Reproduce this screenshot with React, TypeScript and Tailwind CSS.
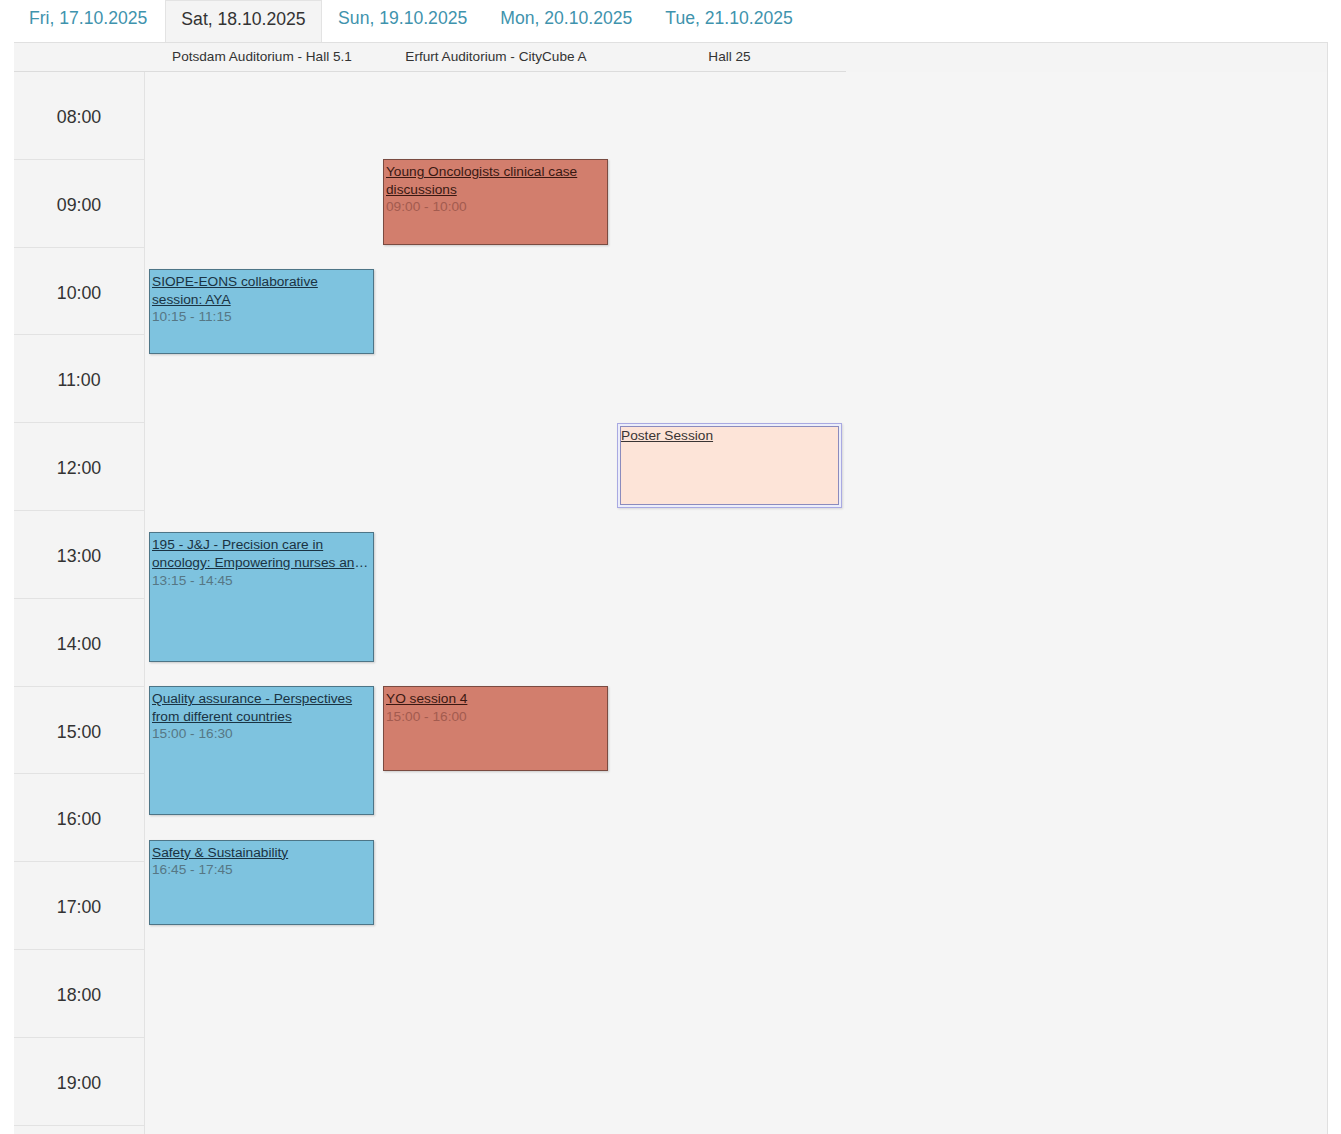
import React from "react";

type Session = {
  title: string;
  time?: string;
  room: number;
  start: number;
  end: number;
  kind: "blue" | "red" | "poster";
};

const HOUR = 87.8;

const days = [
  "Fri, 17.10.2025",
  "Sat, 18.10.2025",
  "Sun, 19.10.2025",
  "Mon, 20.10.2025",
  "Tue, 21.10.2025",
];

const rooms = ["Potsdam Auditorium - Hall 5.1", "Erfurt Auditorium - CityCube A", "Hall 25"];

const hours = ["08:00", "09:00", "10:00", "11:00", "12:00", "13:00", "14:00", "15:00", "16:00", "17:00", "18:00", "19:00", "20:00"];

const sessions: Session[] = [
  { title: "Young Oncologists clinical case discussions", time: "09:00 - 10:00", room: 1, start: 9, end: 10, kind: "red" },
  { title: "SIOPE-EONS collaborative session: AYA", time: "10:15 - 11:15", room: 0, start: 10.25, end: 11.25, kind: "blue" },
  { title: "Poster Session", room: 2, start: 12, end: 13, kind: "poster" },
  { title: "195 - J&J - Precision care in oncology: Empowering nurses and patients through innovation", time: "13:15 - 14:45", room: 0, start: 13.25, end: 14.75, kind: "blue" },
  { title: "Quality assurance - Perspectives from different countries", time: "15:00 - 16:30", room: 0, start: 15, end: 16.5, kind: "blue" },
  { title: "YO session 4", time: "15:00 - 16:00", room: 1, start: 15, end: 16, kind: "red" },
  { title: "Safety & Sustainability", time: "16:45 - 17:45", room: 0, start: 16.75, end: 17.75, kind: "blue" },
];

function SessionBlock({ s }: { s: Session }) {
  const style = {
    left: s.room * 234 + 4,
    top: (s.start - 8) * HOUR - 0.5,
    height: (s.end - s.start) * HOUR - 2.5,
  };

  if (s.kind === "poster") {
    return (
      <div
        style={style}
        className="absolute w-[225px] border border-[#a9a9e2] bg-[#eceefa] p-[2px] shadow-[1px_1px_2px_rgba(0,0,0,0.12)]"
      >
        <div className="h-full border border-[#8b8bbd] bg-[#fde4d8]">
          <a href="#" className="block text-[13.7px] leading-[17px] text-[#3a3434] underline">
            {s.title}
          </a>
        </div>
      </div>
    );
  }

  const blue = s.kind === "blue";
  return (
    <div
      style={style}
      className={
        blue
          ? "absolute w-[225px] border border-[#4d7587] bg-[#7ec3df] pl-[2px] pr-[3px] pt-[3px] shadow-[1px_1px_2px_rgba(0,0,0,0.18)]"
          : "absolute w-[225px] border border-[#7a4b41] bg-[#d27e6d] pl-[2px] pr-[3px] pt-[3px] shadow-[1px_1px_2px_rgba(0,0,0,0.18)]"
      }
    >
      <a
        href="#"
        className={
          blue
            ? "line-clamp-2 text-[13.7px] leading-[17.6px] text-[#1a3343] underline"
            : "line-clamp-2 text-[13.7px] leading-[17.6px] text-[#3a1812] underline"
        }
      >
        {s.title}
      </a>
      <div className={blue ? "text-[13.7px] leading-[17.6px] text-[#567785]" : "text-[13.7px] leading-[17.6px] text-[#a35b4f]"}>
        {s.time}
      </div>
    </div>
  );
}

export default function App() {
  return (
    <div className="min-h-screen bg-white font-['Liberation_Sans',Arial,sans-serif]">
      <div className="pl-[14px]">
        <div className="flex h-[42px] w-[854px] items-stretch bg-white">
          {days.map((d, i) =>
            i === 1 ? (
              <div
                key={d}
                className="border-x border-t border-[#e3e3e3] bg-[#f4f4f4] px-[15px] pt-[7px] text-[17.6px] leading-[22px] text-[#333]"
              >
                {d}
              </div>
            ) : (
              <a
                key={d}
                href="#"
                className={
                  i === 0
                    ? "pl-[15px] pr-[18px] pt-[7px] text-[17.6px] leading-[22px] text-[#3f93ad]"
                    : "px-[16.5px] pt-[7px] text-[17.6px] leading-[22px] text-[#3f93ad]"
                }
              >
                {d}
              </a>
            )
          )}
        </div>

        <div className="w-[1314px] border-r border-t border-[#e0e0e0] bg-[#f4f4f4]">
          <div className="grid h-[29px] w-[832px] grid-cols-[131px_234px_234px_233px] items-center border-b border-[#dcdcdc] pt-[1px] text-[13.6px] text-[#333]">
            <div />
            {rooms.map((r) => (
              <div key={r} className="text-center">
                {r}
              </div>
            ))}
          </div>

          <div className="flex">
            <div className="w-[131px] border-r border-[#e2e2e2]">
              {hours.map((h) => (
                <div
                  key={h}
                  style={{ height: HOUR }}
                  className="flex items-center justify-center border-b border-[#e2e2e2] pt-[4px] text-[17.8px] text-[#333]"
                >
                  {h}
                </div>
              ))}
            </div>
            <div className="relative flex-1 bg-[#f5f5f5]">
              {sessions.map((s) => (
                <SessionBlock key={s.title} s={s} />
              ))}
            </div>
          </div>
        </div>
      </div>
    </div>
  );
}
